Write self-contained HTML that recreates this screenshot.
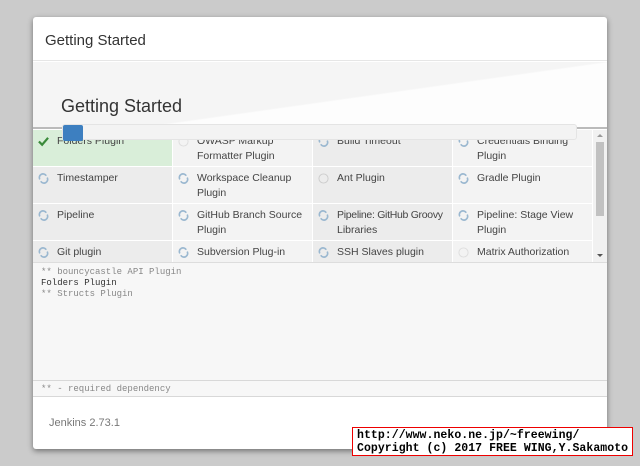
<!DOCTYPE html>
<html><head><style>
*{margin:0;padding:0;box-sizing:border-box}
body{width:640px;height:466px;background:#cbcbcb;position:relative;overflow:hidden;font-family:"Liberation Sans",sans-serif;color:#333}
.dlg{position:absolute;left:33px;top:17px;width:574px;height:432px;background:#fff;border-radius:3px;box-shadow:0 2px 6px rgba(0,0,0,.45);overflow:hidden}
.hd{position:absolute;left:0;top:0;width:100%;height:44px;border-bottom:1px solid #e6e6e6;font-size:15px;padding:15px 0 0 12px;color:#333}
.pan{position:absolute;left:0;top:45px;width:100%;height:67px;background:linear-gradient(172deg,#f5f5f5 55%,#fdfdfd 56%);border-bottom:2px solid #bbb}
.pan h1{position:absolute;left:28px;top:34px;font-size:18px;font-weight:normal;color:#333}
.prog{position:absolute;left:29px;top:107px;width:515px;height:16px;background:#f3f3f3;border-radius:3px;border:1px solid #e4e4e4;z-index:5}
.prog i{position:absolute;left:0;top:0;width:20px;height:16px;background:#3d7fc0;border-radius:2px}
.grid{position:absolute;left:0;top:113px;width:560px;height:132px;overflow:hidden;background:#fff}
.row{display:flex;height:37px}
.c{width:140px;border-right:1px solid #fff;border-bottom:1px solid #fff;background:#ececec;position:relative;font-size:10.5px;line-height:15px;padding:4px 2px 0 24px;color:#444;white-space:nowrap}
.c.l{background:#f3f3f3}
.c.ok{background:#d9eed9}
.ic{position:absolute;left:5px;top:6px;width:11px;height:11px}
.sb{position:absolute;left:560px;top:113px;width:14px;height:132px;background:#f1f1f1}
.sb i{position:absolute;left:3px;top:12px;width:8px;height:74px;background:#c1c1c1}
.sb b{position:absolute;left:4px;width:0;height:0;border-left:3px solid transparent;border-right:3px solid transparent}
.log{position:absolute;left:0;top:245px;width:100%;height:118px;background:#f7f7f7;border-top:1px solid #ddd;font-family:"Liberation Mono","WenQuanYi Zen Hei",monospace;font-size:9px;line-height:11px;padding:4px 0 0 8px;color:#888}
.log b{font-weight:normal;color:#333}
.req{position:absolute;left:0;top:363px;width:100%;height:17px;background:#f7f7f7;border-top:1px solid #d8d8d8;border-bottom:1px solid #d8d8d8;font-family:"Liberation Mono",monospace;font-size:9px;color:#888;padding:3px 0 0 8px}
.ft{position:absolute;left:16px;top:400px;font-size:11px;color:#777}
.wm{position:absolute;left:352px;top:427px;width:281px;height:29px;background:#fff;border:1px solid #e00;font-family:"Liberation Mono",monospace;font-weight:bold;font-size:11.5px;line-height:13px;padding:1px 0 0 4px;color:#000;white-space:nowrap;letter-spacing:.05px}
</style></head><body>
<div class="dlg">
<div class="hd">Getting Started</div>
<div class="pan"><h1>Getting Started</h1></div>
<div class="prog"><i></i></div>
<div class="grid">
<div class="row">
<div class="c ok"><svg class="ic" viewBox="0 0 12 12"><path d="M1 6l3.5 3.5L11 2" stroke="#3a8a3a" stroke-width="2.4" fill="none"/></svg>Folders Plugin</div>
<div class="c l"><svg class="ic" viewBox="0 0 12 12"><circle cx="6" cy="6" r="5" stroke="#ddd" fill="none"/></svg>OWASP Markup<br>Formatter Plugin</div>
<div class="c"><svg class="ic" viewBox="0 0 12 12"><path d="M2 7A4 4 0 0 1 9 3M10 5A4 4 0 0 1 3 9" stroke="#9bb8d0" stroke-width="1.8" fill="none"/></svg>Build Timeout</div>
<div class="c l"><svg class="ic" viewBox="0 0 12 12"><path d="M2 7A4 4 0 0 1 9 3M10 5A4 4 0 0 1 3 9" stroke="#9bb8d0" stroke-width="1.8" fill="none"/></svg>Credentials Binding<br>Plugin</div>
</div>
<div class="row">
<div class="c"><svg class="ic" viewBox="0 0 12 12"><path d="M2 7A4 4 0 0 1 9 3M10 5A4 4 0 0 1 3 9" stroke="#9bb8d0" stroke-width="1.8" fill="none"/></svg>Timestamper</div>
<div class="c l"><svg class="ic" viewBox="0 0 12 12"><path d="M2 7A4 4 0 0 1 9 3M10 5A4 4 0 0 1 3 9" stroke="#9bb8d0" stroke-width="1.8" fill="none"/></svg>Workspace Cleanup<br>Plugin</div>
<div class="c"><svg class="ic" viewBox="0 0 12 12"><circle cx="6" cy="6" r="5" stroke="#ccc" fill="none"/></svg>Ant Plugin</div>
<div class="c l"><svg class="ic" viewBox="0 0 12 12"><path d="M2 7A4 4 0 0 1 9 3M10 5A4 4 0 0 1 3 9" stroke="#9bb8d0" stroke-width="1.8" fill="none"/></svg>Gradle Plugin</div>
</div>
<div class="row">
<div class="c"><svg class="ic" viewBox="0 0 12 12"><path d="M2 7A4 4 0 0 1 9 3M10 5A4 4 0 0 1 3 9" stroke="#9bb8d0" stroke-width="1.8" fill="none"/></svg>Pipeline</div>
<div class="c l"><svg class="ic" viewBox="0 0 12 12"><path d="M2 7A4 4 0 0 1 9 3M10 5A4 4 0 0 1 3 9" stroke="#9bb8d0" stroke-width="1.8" fill="none"/></svg>GitHub Branch Source<br>Plugin</div>
<div class="c"><svg class="ic" viewBox="0 0 12 12"><path d="M2 7A4 4 0 0 1 9 3M10 5A4 4 0 0 1 3 9" stroke="#9bb8d0" stroke-width="1.8" fill="none"/></svg><span style="letter-spacing:-.3px">Pipeline: GitHub Groovy</span><br>Libraries</div>
<div class="c l"><svg class="ic" viewBox="0 0 12 12"><path d="M2 7A4 4 0 0 1 9 3M10 5A4 4 0 0 1 3 9" stroke="#9bb8d0" stroke-width="1.8" fill="none"/></svg>Pipeline: Stage View<br>Plugin</div>
</div>
<div class="row">
<div class="c"><svg class="ic" viewBox="0 0 12 12"><path d="M2 7A4 4 0 0 1 9 3M10 5A4 4 0 0 1 3 9" stroke="#9bb8d0" stroke-width="1.8" fill="none"/></svg>Git plugin</div>
<div class="c l"><svg class="ic" viewBox="0 0 12 12"><path d="M2 7A4 4 0 0 1 9 3M10 5A4 4 0 0 1 3 9" stroke="#9bb8d0" stroke-width="1.8" fill="none"/></svg>Subversion Plug-in</div>
<div class="c"><svg class="ic" viewBox="0 0 12 12"><path d="M2 7A4 4 0 0 1 9 3M10 5A4 4 0 0 1 3 9" stroke="#9bb8d0" stroke-width="1.8" fill="none"/></svg>SSH Slaves plugin</div>
<div class="c l"><svg class="ic" viewBox="0 0 12 12"><circle cx="6" cy="6" r="5" stroke="#ddd" fill="none"/></svg>Matrix Authorization</div>
</div>
</div>
<div class="sb"><b style="top:4px;border-bottom:3px solid #999"></b><i></i><b style="top:124px;border-top:3px solid #555"></b></div>
<div class="log">** bouncycastle API Plugin<br><b>Folders Plugin</b><br>** Structs Plugin</div>
<div class="req">** - required dependency</div>
<div class="ft">Jenkins 2.73.1</div>
</div>
<div class="wm">http://www.neko.ne.jp/~freewing/<br>Copyright (c) 2017 FREE WING,Y.Sakamoto</div>
</body></html>
